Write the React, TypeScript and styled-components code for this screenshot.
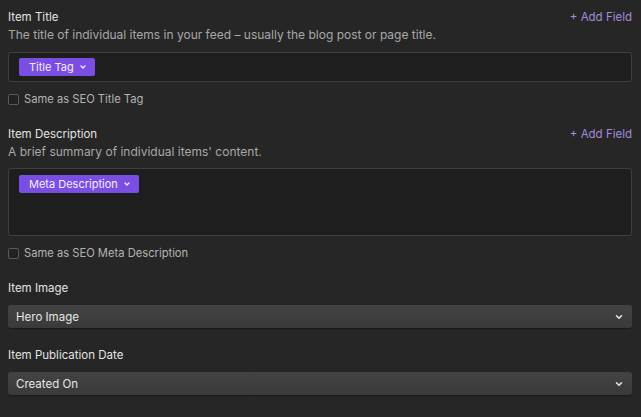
import { ReactNode } from 'react';
import styled, { createGlobalStyle } from 'styled-components';

const GlobalStyle = createGlobalStyle`
  html, body {
    margin: 0;
    padding: 0;
    background: #262626;
  }
  body {
    font-family: Inter, 'Noto Sans', sans-serif;
    -webkit-font-smoothing: antialiased;
  }
`;

function Chevron({ size = 8 }: { size?: number }) {
  return (
    <svg width={size} height={size} viewBox="0 0 10 10" fill="none">
      <path
        d="M2.5 3.8 L5 6.3 L7.5 3.8"
        stroke="currentColor"
        strokeWidth="1.6"
        strokeLinecap="round"
        strokeLinejoin="round"
      />
    </svg>
  );
}

type TagFieldProps = {
  label: string;
  hint: string;
  tag: string;
  checkLabel: string;
  tall?: boolean;
};

function TagField({ label, hint, tag, checkLabel, tall }: TagFieldProps) {
  return (
    <Section>
      <HeaderRow>
        <Label>{label}</Label>
        <AddLink>+ Add Field</AddLink>
      </HeaderRow>
      <Hint>{hint}</Hint>
      <TagBox $tall={tall}>
        <Tag>
          {tag}
          <Chevron />
        </Tag>
      </TagBox>
      <CheckRow>
        <CheckBox />
        {checkLabel}
      </CheckRow>
    </Section>
  );
}

function SelectField({ label, value }: { label: string; value: ReactNode }) {
  return (
    <SelectSection>
      <SelectLabel>{label}</SelectLabel>
      <Select>
        {value}
        <Chevron size={10} />
      </Select>
    </SelectSection>
  );
}

export default function App() {
  return (
    <>
      <GlobalStyle />
      <Page>
        <TagField
          label="Item Title"
          hint="The title of individual items in your feed – usually the blog post or page title."
          tag="Title Tag"
          checkLabel="Same as SEO Title Tag"
        />
        <TagField
          label="Item Description"
          hint="A brief summary of individual items' content."
          tag="Meta Description"
          checkLabel="Same as SEO Meta Description"
          tall
        />
        <SelectField label="Item Image" value="Hero Image" />
        <SelectField label="Item Publication Date" value="Created On" />
      </Page>
    </>
  );
}

const Page = styled.div`
  box-sizing: border-box;
  width: 641px;
  height: 417px;
  padding: 9px 9px 0 8px;
  display: flex;
  flex-direction: column;
  color: #e6e6e6;
  font-size: 12px;
`;

const Section = styled.div`
  display: flex;
  flex-direction: column;
  margin-bottom: 20px;
`;

const SelectSection = styled(Section)`
  margin-bottom: 19px;
`;

const HeaderRow = styled.div`
  display: flex;
  justify-content: space-between;
  align-items: center;
  height: 16px;
`;

const Label = styled.div`
  font-size: 11.5px;
  line-height: 16px;
  color: #e3e3e3;
`;

const SelectLabel = styled(Label)`
  margin-bottom: 9px;
`;

const AddLink = styled.div`
  font-size: 11.5px;
  line-height: 16px;
  color: #a48bdb;
  cursor: pointer;
`;

const Hint = styled.div`
  margin-top: 2px;
  font-size: 12px;
  line-height: 16px;
  color: #a8a8a8;
`;

const TagBox = styled.div<{ $tall?: boolean }>`
  box-sizing: border-box;
  margin-top: ${(p) => (p.$tall ? '8px' : '9px')};
  height: ${(p) => (p.$tall ? '68px' : '30px')};
  padding: ${(p) => (p.$tall ? '6px' : '5px')} 10px;
  background: #1e1e1e;
  border: 1px solid #3e3e3e;
  border-radius: 3px;
  display: flex;
  align-items: flex-start;
`;

const Tag = styled.div`
  display: inline-flex;
  align-items: center;
  gap: 5px;
  height: 18px;
  padding: 0 8px 0 10px;
  background: #7a4de3;
  border-radius: 2px;
  color: #f3eefe;
  font-size: 11px;
  line-height: 18px;
`;

const CheckRow = styled.label`
  display: flex;
  align-items: center;
  gap: 5px;
  height: 14px;
  margin-top: 10px;
  font-size: 11.2px;
  line-height: 14px;
  color: #b3b3b3;
`;

const CheckBox = styled.span`
  box-sizing: border-box;
  width: 11px;
  height: 11px;
  border: 1px solid #5a5a5a;
  border-radius: 2px;
  background: #222;
`;

const Select = styled.div`
  box-sizing: border-box;
  height: 23px;
  padding: 0 8px;
  display: flex;
  align-items: center;
  justify-content: space-between;
  background: linear-gradient(#434343, #3a3a3a);
  border-radius: 3px;
  box-shadow: 0 1px 1px rgba(0, 0, 0, 0.35);
  color: #e6e6e6;
  font-size: 11.5px;
`;
